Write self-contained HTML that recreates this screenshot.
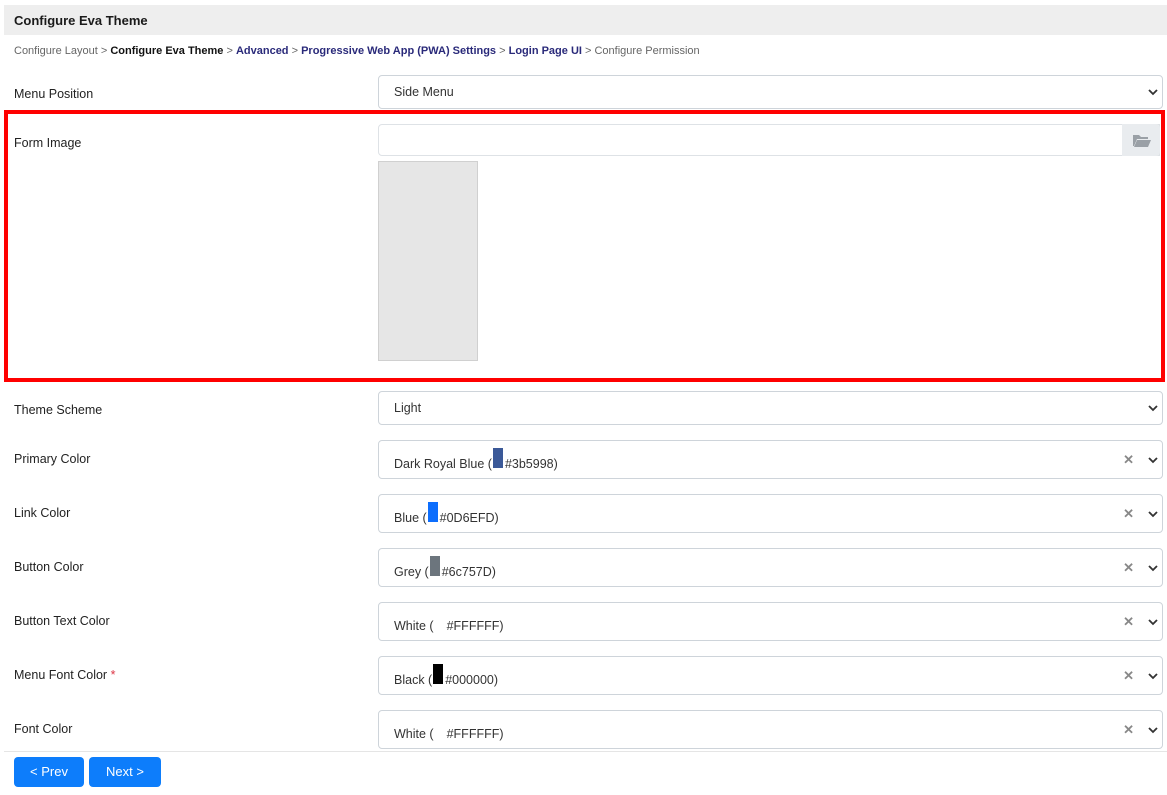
<!DOCTYPE html>
<html><head><meta charset="utf-8"><style>
*{box-sizing:border-box;margin:0;padding:0}
body{width:1167px;height:795px;background:#fff;font-family:"Liberation Sans",sans-serif;font-size:12.5px;color:#212529;position:relative;overflow:hidden}
.a{position:absolute}
.hdr{left:4px;top:5px;width:1163px;height:30px;background:#eeeeee;font-weight:bold;font-size:13px;padding:8px 10px;color:#1a1a1a}
.bc{left:14px;top:45px;font-size:11px;color:#666;white-space:nowrap}
.bc b{color:#111}.bc a{color:#2a2a7a;font-weight:bold;text-decoration:none}
.lbl{left:14px;font-size:12.5px;color:#222}
.sel{left:378px;width:785px;border:1px solid #ced4da;border-radius:4px;padding-left:15px;color:#333;font-size:12.5px}
.chev{position:absolute;right:4px;top:50%;margin-top:-4px}
.x{position:absolute;right:28px;top:50%;margin-top:-8px;color:#888;font-size:13px;font-weight:bold}
.sw{display:inline-block;width:10px;height:20px;margin:0 2px 0 1px;position:relative;top:-9px;vertical-align:top}
.btn{top:757px;height:30px;background:#0d7dfb;color:#fff;border-radius:4px;font-size:13px;text-align:center;line-height:30px}
</style></head><body>
<div class="a hdr">Configure Eva Theme</div>
<div class="a bc" style="top:45px">Configure Layout &gt; <b>Configure Eva Theme</b> &gt; <a>Advanced</a> &gt; <a>Progressive Web App (PWA) Settings</a> &gt; <a>Login Page UI</a> &gt; Configure Permission</div>

<div class="a lbl" style="top:87px">Menu Position</div>
<div class="a sel" style="top:75px;height:34px;line-height:33px">Side Menu<svg class="chev" width="10" height="8" viewBox="0 0 10 8"><path d="M1 2l4 4 4-4" stroke="#333" stroke-width="1.8" fill="none"/></svg></div>

<div class="a" style="left:4px;top:110px;width:1161px;height:272px;border:4px solid #ff0000"></div>
<div class="a lbl" style="top:136px">Form Image</div>
<div class="a" style="left:378px;top:124px;width:782px;height:32px;border:1px solid #dee2e6;border-radius:4px 0 0 4px"></div>
<div class="a" style="left:1122px;top:124px;width:38px;height:32px;background:#e9ecef;border-radius:0 4px 4px 0"><svg style="position:absolute;left:11px;top:10px" width="18" height="13" viewBox="0 0 18 13"><path d="M0 1h6l2 2h7v2H4L1 12H0z" fill="#9aa0a6"/><path d="M4 6h14l-3 7H1z" fill="#9aa0a6"/></svg></div>
<div class="a" style="left:378px;top:161px;width:100px;height:200px;background:#e6e6e6;border:1px solid #d0d0d0"></div>

<div class="a lbl" style="top:403px">Theme Scheme</div>
<div class="a sel" style="top:391px;height:34px;line-height:33px">Light<svg class="chev" width="10" height="8" viewBox="0 0 10 8"><path d="M1 2l4 4 4-4" stroke="#333" stroke-width="1.8" fill="none"/></svg></div>

<div class="a lbl" style="top:452px">Primary Color</div>
<div class="a sel" style="top:440px;height:39px;padding-top:16px">Dark Royal Blue (<span class="sw" style="background:#3b5998"></span>#3b5998)<span class="x">✕</span><svg class="chev" width="10" height="8" viewBox="0 0 10 8"><path d="M1 2l4 4 4-4" stroke="#333" stroke-width="1.8" fill="none"/></svg></div>

<div class="a lbl" style="top:506px">Link Color</div>
<div class="a sel" style="top:494px;height:39px;padding-top:16px">Blue (<span class="sw" style="background:#0d6efd"></span>#0D6EFD)<span class="x">✕</span><svg class="chev" width="10" height="8" viewBox="0 0 10 8"><path d="M1 2l4 4 4-4" stroke="#333" stroke-width="1.8" fill="none"/></svg></div>

<div class="a lbl" style="top:560px">Button Color</div>
<div class="a sel" style="top:548px;height:39px;padding-top:16px">Grey (<span class="sw" style="background:#6c757d"></span>#6c757D)<span class="x">✕</span><svg class="chev" width="10" height="8" viewBox="0 0 10 8"><path d="M1 2l4 4 4-4" stroke="#333" stroke-width="1.8" fill="none"/></svg></div>

<div class="a lbl" style="top:614px">Button Text Color</div>
<div class="a sel" style="top:602px;height:39px;padding-top:16px">White (<span class="sw" style="background:#fff"></span>#FFFFFF)<span class="x">✕</span><svg class="chev" width="10" height="8" viewBox="0 0 10 8"><path d="M1 2l4 4 4-4" stroke="#333" stroke-width="1.8" fill="none"/></svg></div>

<div class="a lbl" style="top:668px">Menu Font Color <span style="color:#dc3545">*</span></div>
<div class="a sel" style="top:656px;height:39px;padding-top:16px">Black (<span class="sw" style="background:#000"></span>#000000)<span class="x">✕</span><svg class="chev" width="10" height="8" viewBox="0 0 10 8"><path d="M1 2l4 4 4-4" stroke="#333" stroke-width="1.8" fill="none"/></svg></div>

<div class="a lbl" style="top:722px">Font Color</div>
<div class="a sel" style="top:710px;height:39px;padding-top:16px">White (<span class="sw" style="background:#fff"></span>#FFFFFF)<span class="x">✕</span><svg class="chev" width="10" height="8" viewBox="0 0 10 8"><path d="M1 2l4 4 4-4" stroke="#333" stroke-width="1.8" fill="none"/></svg></div>

<div class="a" style="left:4px;top:751px;width:1163px;height:1px;background:#e5e5e5"></div>
<div class="a btn" style="left:14px;width:70px">&lt; Prev</div>
<div class="a btn" style="left:89px;width:72px">Next &gt;</div>
</body></html>
